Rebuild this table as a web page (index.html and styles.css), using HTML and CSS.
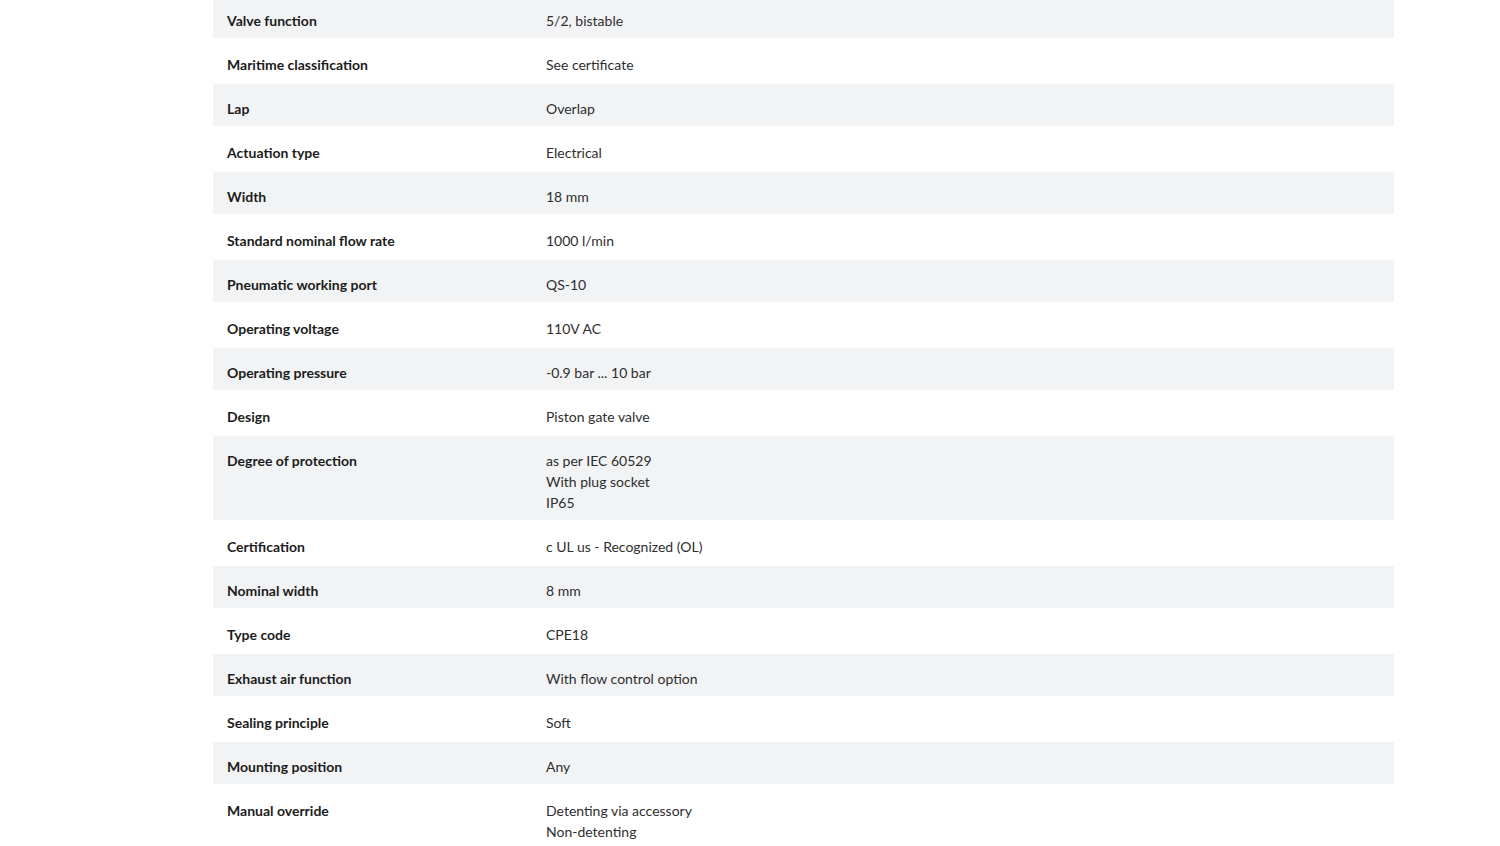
FILE: index.html
```html
<!DOCTYPE html>
<html lang="en">
<head>
<meta charset="utf-8">
<title>Technical data</title>
<link rel="stylesheet" href="styles.css">
</head>
<body>
<div class="page">
  <table class="specs">
    <tbody>
      <tr class="odd"><th>Valve function</th><td>5/2, bistable</td></tr>
      <tr><th>Maritime classification</th><td>See certificate</td></tr>
      <tr class="odd"><th>Lap</th><td>Overlap</td></tr>
      <tr><th>Actuation type</th><td>Electrical</td></tr>
      <tr class="odd"><th>Width</th><td>18 mm</td></tr>
      <tr><th>Standard nominal flow rate</th><td>1000 l/min</td></tr>
      <tr class="odd"><th>Pneumatic working port</th><td>QS-10</td></tr>
      <tr><th>Operating voltage</th><td>110V AC</td></tr>
      <tr class="odd"><th>Operating pressure</th><td>-0.9 bar ... 10 bar</td></tr>
      <tr><th>Design</th><td>Piston gate valve</td></tr>
      <tr class="odd"><th>Degree of protection</th><td>as per IEC 60529<br>With plug socket<br>IP65</td></tr>
      <tr><th>Certification</th><td>c UL us - Recognized (OL)</td></tr>
      <tr class="odd"><th>Nominal width</th><td>8 mm</td></tr>
      <tr><th>Type code</th><td>CPE18</td></tr>
      <tr class="odd"><th>Exhaust air function</th><td>With flow control option</td></tr>
      <tr><th>Sealing principle</th><td>Soft</td></tr>
      <tr class="odd"><th>Mounting position</th><td>Any</td></tr>
      <tr><th>Manual override</th><td>Detenting via accessory<br>Non-detenting</td></tr>
    </tbody>
  </table>
</div>
</body>
</html>
```

FILE: styles.css
```css
html, body {
  margin: 0;
  padding: 0;
  background: #ffffff;
}

body {
  font-family: Lato, "Liberation Sans", sans-serif;
  font-size: 14px;
  color: #333333;
  overflow: hidden;
  height: 846px;
}

.page {
  padding-left: 213px;
  width: 1181px;
}

.specs {
  width: 1181px;
  margin-top: -6px;
  border-collapse: separate;
  border-spacing: 0 2px;
  table-layout: fixed;
}

.specs th,
.specs td {
  text-align: left;
  vertical-align: top;
  line-height: 21px;
  padding: 14px 14px 7px 14px;
}

.specs th {
  width: 291px;
  font-weight: 700;
  color: #1c1c1c;
}

.specs td {
  font-weight: 400;
  color: #2e2e2e;
}

.specs tr.odd th,
.specs tr.odd td {
  background: #f2f3f5;
}
```
